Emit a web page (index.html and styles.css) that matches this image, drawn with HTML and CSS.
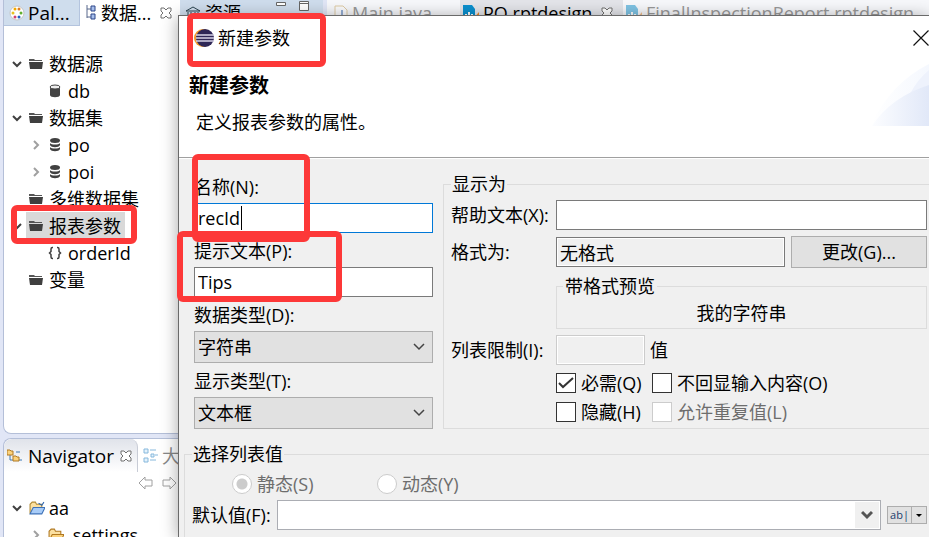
FILE: index.html
```
<!DOCTYPE html>
<html lang="zh-CN">
<head>
    <meta charset="UTF-8">
    <meta name="viewport" content="width=device-width, initial-scale=1.0">
    <title>新建参数</title>
    <link rel="stylesheet" href="styles.css">
</head>
<body>

    <!-- Shared icons -->
    <svg class="sprite" aria-hidden="true">
        <symbol id="folder" viewBox="0 0 14 12">
            <path d="M0 3V1h5l1 1h7v1z" fill="#555"/>
            <path d="M0 4h14l-1 7H1z" fill="#3f3f3f"/>
        </symbol>
        <symbol id="down" viewBox="0 0 10 10">
            <path d="M1 3l4 4 4-4" fill="none" stroke="#404040" stroke-width="2"/>
        </symbol>
        <symbol id="right" viewBox="0 0 10 10">
            <path d="M3 1l4 4-4 4" fill="none" stroke="#a0a0a0" stroke-width="2"/>
        </symbol>
        <symbol id="dataset" viewBox="0 0 12 14">
            <ellipse cx="6" cy="2.5" rx="5" ry="2.5" fill="#404040"/>
            <path d="M1 5c1 2 9 2 10 0v2c-1 3-9 3-10 0zM1 9c1 2 9 2 10 0v2c-1 3-9 3-10 0z" fill="#404040"/>
        </symbol>
        <symbol id="tab-x" viewBox="0 0 12 12">
            <path d="M1 1h3l2 2 2-2h3v3L9 6l2 2v3H8L6 9l-2 2H1V8l2-2-2-2z" fill="#fff" stroke="#707070"/>
        </symbol>
        <symbol id="report" viewBox="0 0 16 16">
            <path d="M0 0h9l3 4v12H0z" fill="#0a8fce"/>
            <path d="M2 9h2v5H2zM5 7h2v7H5zM8 9h2v5H8z" fill="#fff"/>
            <path d="M11 13l5-6v9h-5z" fill="#f08a24"/>
        </symbol>
    </svg>

    <div class="workbench">
        <div class="side">
            <div class="view view-top">
                <div class="tabs">
                    <a href="#" class="tab tab-palette">
                        <svg width="16" height="16" viewBox="0 0 16 16">
                            <circle cx="8" cy="8" r="7" fill="#fff" stroke="#c5c5c5"/>
                            <circle cx="6" cy="4" r="1.5" fill="#f0a800"/><circle cx="10" cy="4" r="1.5" fill="#e08020"/>
                            <circle cx="4" cy="8" r="1.5" fill="#e8c020"/><circle cx="12" cy="8" r="1.5" fill="#60b030"/>
                            <circle cx="6" cy="12" r="1.5" fill="#d04070"/><circle cx="10" cy="12" r="1.5" fill="#2060c0"/>
                        </svg>
                        Pal...
                    </a>
                    <a href="#" class="tab tab-data">
                        <svg width="12" height="16" viewBox="0 0 12 16">
                            <path d="M2 0v13M2 4h4M2 12h4" stroke="#58688c" fill="none"/>
                            <path d="M6 1h4v5H6zM6 9h4v5H6z" fill="#a8c0ec" stroke="#2c4488"/>
                        </svg>
                        <span>数据...</span>
                        <svg class="tab-close" width="12" height="12"><use href="#tab-x"/></svg>
                    </a>
                </div>
                <ul class="tree">
                    <li><svg class="arrow"><use href="#down"/></svg><svg class="icon"><use href="#folder"/></svg><span>数据源</span></li>
                    <li class="child"><i class="arrow"></i>
                        <svg class="icon" viewBox="0 0 12 14"><path d="M1 3v8c0 3 10 3 10 0V3z" fill="#444"/><ellipse cx="6" cy="3" rx="5" ry="2" fill="#eee" stroke="#444"/></svg>
                        <span>db</span></li>
                    <li><svg class="arrow"><use href="#down"/></svg><svg class="icon"><use href="#folder"/></svg><span>数据集</span></li>
                    <li class="child"><svg class="arrow"><use href="#right"/></svg><svg class="icon"><use href="#dataset"/></svg><span>po</span></li>
                    <li class="child"><svg class="arrow"><use href="#right"/></svg><svg class="icon"><use href="#dataset"/></svg><span>poi</span></li>
                    <li><i class="arrow"></i><svg class="icon"><use href="#folder"/></svg><span>多维数据集</span></li>
                    <li class="selected"><svg class="arrow"><use href="#down"/></svg><div class="item"><svg class="icon"><use href="#folder"/></svg><span>报表参数</span></div></li>
                    <li class="child"><i class="arrow"></i>
                        <svg class="icon" viewBox="0 0 14 14"><path d="M5 1.5H4.500Q3 1.500 3 3v2.500L1.500 7 3 8.500V11q0 1.500 1.500 1.500H5M9 1.500h.5Q11 1.500 11 3v2.500L12.500 7 11 8.500V11q0 1.500-1.500 1.500H9" fill="none" stroke="#404040" stroke-width="1.5"/></svg>
                        <span>orderId</span></li>
                    <li><i class="arrow"></i><svg class="icon"><use href="#folder"/></svg><span>变量</span></li>
                </ul>
            </div>

            <div class="view view-bottom">
                <div class="tabs">
                    <a href="#" class="tab tab-navigator">
                        <svg width="15" height="14" viewBox="0 0 15 14">
                            <path d="M3 4v7h4M9 3h4M12 11h3" stroke="#3c78b4" fill="none"/>
                            <path d="M0 1h3l1 1h2v4H0zM6 7h3l1 1h2v4H6z" fill="#fbd27c" stroke="#b07820"/>
                        </svg>
                        <span>Navigator</span>
                        <svg width="12" height="12"><use href="#tab-x"/></svg>
                    </a>
                    <a href="#" class="tab tab-outline">
                        <svg width="15" height="16" viewBox="0 0 15 16">
                            <path d="M1 1h4v4H1zM1 10h4v4H1zM8 6h3v3H8z" fill="#e4f2fc" stroke="#86b8dc"/>
                            <path d="M7 2h6M7 12h6M12 7h3" stroke="#86b8dc"/>
                        </svg>
                        大
                    </a>
                </div>
                <div class="toolbar">
                    <button type="button" aria-label="后退"><svg width="16" height="14" viewBox="0 0 16 14"><path d="M1 7l6-6v3h7v6H7v3z" fill="#fff" stroke="#a0a0a0"/></svg></button>
                    <button type="button" aria-label="前进"><svg width="16" height="14" viewBox="0 0 16 14"><path d="M15 7L9 1v3H2v6h7v3z" fill="#fff" stroke="#a0a0a0"/></svg></button>
                </div>
                <ul class="tree tree-files">
                    <li><svg class="arrow"><use href="#down"/></svg>
                        <svg class="icon" viewBox="0 0 15 13"><path d="M1 12V3l2-2h3l1 2h5v3" fill="#fbe0a0" stroke="#b08830"/><path d="M1 12l3-6h11l-3 6z" fill="#a8ccf8" stroke="#3c70b8"/><path d="M9 2l3 2 2-3" fill="none" stroke="#2c64b0"/></svg>
                        <span>aa</span></li>
                    <li class="child"><svg class="arrow"><use href="#right"/></svg>
                        <svg class="icon" viewBox="0 0 15 13"><path d="M1 12V3l2-2h3l1 2h5v3" fill="#fbe0a0" stroke="#b07820"/><path d="M1 12l3-6h11l-3 6z" fill="#fbd27c" stroke="#b07820"/></svg>
                        <span>.settings</span></li>
                </ul>
            </div>
        </div>

        <div class="main">
            <div class="tabs tabs-resource">
                <a href="#" class="tab">
                    <svg width="16" height="14" viewBox="0 0 16 14"><path d="M1 5l7-4 7 4zM3 6v6M6 6v6M10 6v6M13 6v6M1 13h14" fill="none" stroke="#2c4450"/></svg>
                    <span>资源</span>
                </a>
                <span class="window-buttons">
                    <svg width="10" height="12" viewBox="0 0 10 12"><path d="M0.5 2.5h9v3h-9z" fill="#fff" stroke="#666"/></svg>
                    <svg width="10" height="12" viewBox="0 0 10 12"><path d="M0.5 1.5h9v9h-9zM0 3.5h10" fill="#fff" stroke="#666"/></svg>
                </span>
            </div>
            <div class="tabs tabs-editor">
                <a href="#" class="tab dim">
                    <svg width="14" height="16" viewBox="0 0 14 16"><path d="M1 1h8l4 4v10H1z" fill="#fff" stroke="#c8a050"/><path d="M8 5v5q0 3-4 2" fill="none" stroke="#3868b0" stroke-width="2"/></svg>
                    Main.java
                </a>
                <a href="#" class="tab current">
                    <svg width="16" height="16"><use href="#report"/></svg>
                    <span>PO.rptdesign</span>
                    <svg class="tab-close" width="12" height="12"><use href="#tab-x"/></svg>
                </a>
                <a href="#" class="tab dim">
                    <svg width="16" height="16"><use href="#report"/></svg>
                    FinalInspectionReport.rptdesign
                </a>
            </div>
        </div>
    </div>

    <!-- New parameter dialog -->
    <div class="dialog" role="dialog" aria-labelledby="dialog-title">
        <div class="titlebar">
            <svg width="20" height="20" viewBox="0 0 20 20">
                <circle cx="9" cy="10" r="9" fill="#f39a2c"/>
                <circle cx="11" cy="10" r="9" fill="#2f2757"/>
                <path d="M2 7h18M2 10h18M2 13h18" stroke="#d8d4e8" stroke-width="1.5"/>
            </svg>
            <span id="dialog-title">新建参数</span>
            <button type="button" class="close" aria-label="关闭">
                <svg width="16" height="16" viewBox="0 0 16 16"><path d="M0.5 0.5l15 15M15.5 0.5l-15 15" stroke="#111" stroke-width="1.2"/></svg>
            </button>
        </div>
        <div class="header">
            <div>
                <h1>新建参数</h1>
                <p>定义报表参数的属性。</p>
            </div>
            <svg class="banner" width="58" height="64" viewBox="0 0 58 64">
                <defs>
                    <linearGradient id="fade"><stop offset="0" stop-color="#fcfdff"/><stop offset="1" stop-color="#e1e8f8"/></linearGradient>
                    <linearGradient id="fade-light"><stop offset="0" stop-color="#fff"/><stop offset="1" stop-color="#f5f8fe"/></linearGradient>
                </defs>
                <path d="M0 62Q20 20 58 1V62z" fill="url(#fade-light)"/>
                <path d="M39 31Q46 17 58 7V31z" fill="#eef2fc"/>
                <path d="M1 63Q20 34 58 22V63z" fill="url(#fade)"/>
            </svg>
        </div>

        <form class="body">
            <div class="columns">
                <div class="fields">
                    <div class="field">
                        <label for="name">名称(N):</label>
                        <div class="caret-box">
                            <input type="text" id="name" class="active" value="recId">
                            <span class="caret"></span>
                        </div>
                    </div>
                    <div class="field">
                        <label for="prompt">提示文本(P):</label>
                        <input type="text" id="prompt" value="Tips">
                    </div>
                    <div class="field">
                        <label for="data-type">数据类型(D):</label>
                        <select id="data-type"><option>字符串</option></select>
                    </div>
                    <div class="field">
                        <label for="display-type">显示类型(T):</label>
                        <select id="display-type"><option>文本框</option></select>
                    </div>
                </div>

                <fieldset class="group display-as">
                    <legend>显示为</legend>
                    <div class="row">
                        <label for="help">帮助文本(X):</label>
                        <input type="text" id="help">
                    </div>
                    <div class="row">
                        <label for="format">格式为:</label>
                        <div class="format">
                            <input type="text" id="format" value="无格式" readonly>
                            <button type="button" class="change">更改(G)...</button>
                        </div>
                    </div>
                    <div class="row">
                        <fieldset class="group preview">
                            <legend>带格式预览</legend>
                            <div>我的字符串</div>
                        </fieldset>
                    </div>
                    <div class="row">
                        <label for="limit">列表限制(I):</label>
                        <div class="limit">
                            <input type="text" id="limit" disabled>
                            <span>值</span>
                        </div>
                    </div>
                    <div class="checks">
                        <label><input type="checkbox" checked>必需(Q)</label>
                        <label><input type="checkbox">不回显输入内容(O)</label>
                        <label><input type="checkbox">隐藏(H)</label>
                        <label class="disabled"><input type="checkbox" disabled>允许重复值(L)</label>
                    </div>
                </fieldset>
            </div>

            <fieldset class="group list-values">
                <legend>选择列表值</legend>
                <div class="radios">
                    <label class="disabled"><input type="radio" name="source" checked disabled>静态(S)</label>
                    <label class="disabled"><input type="radio" name="source" disabled>动态(Y)</label>
                </div>
                <div class="default-row">
                    <label for="default">默认值(F):</label>
                    <div class="combo">
                        <input type="text" id="default">
                        <button type="button" aria-label="展开">
                            <svg width="12" height="10" viewBox="0 0 12 10"><path d="M1 2l5 5 5-5" fill="none" stroke="#555" stroke-width="3"/></svg>
                        </button>
                    </div>
                    <div class="split">
                        <button type="button">ab|</button>
                        <button type="button" aria-label="更多"><svg width="6" height="3" viewBox="0 0 6 3"><path d="M0 0h6L3 3z"/></svg></button>
                    </div>
                </div>
            </fieldset>
        </form>
    </div>

    <!-- Red callouts -->
    <div class="mark mark-title"></div>
    <div class="mark mark-name"></div>
    <div class="mark mark-prompt"></div>
    <div class="mark mark-tree"></div>

</body>
</html>
```

FILE: styles.css
```
* {
    box-sizing: border-box;
}
body {
    margin: 0;
    height: 100vh;
    overflow: hidden;
    position: relative;
    font-family: "Open Sans", "Noto Sans CJK SC", sans-serif;
    font-size: 18px;
    line-height: 24px;
    color: #000;
    background-color: #e1e6f6;
}
input, select, button {
    font: inherit;
    color: inherit;
    margin: 0;
}
svg {
    display: block;
    flex-shrink: 0;
}
.sprite {
    position: absolute;
    width: 0;
    height: 0;
}

/* Workbench behind the dialog */
.workbench {
    display: flex;
    height: 100%;
    padding-left: 3px;
}
.side {
    display: flex;
    flex-direction: column;
    gap: 4px;
    width: 177px;
    flex-shrink: 0;
}
.view {
    background-color: #fff;
    border: 1px solid #b4bfd8;
    border-right: none;
    overflow: hidden;
}
.view-top {
    height: 434px;
    flex-shrink: 0;
    border-top: none;
    border-radius: 0 0 0 8px;
}
.view-bottom {
    flex: 1;
    border-bottom: none;
    border-radius: 8px 0 0 0;
}
.tabs {
    display: flex;
    height: 26px;
    white-space: nowrap;
}
.tab {
    display: flex;
    align-items: center;
    gap: 4px;
    padding: 0 5px;
    color: #000;
    text-decoration: none;
}
.tab-palette {
    width: 76px;
    flex-shrink: 0;
    font-size: 19px;
    gap: 3px;
    background-color: #cfdded;
    border-right: 1px solid #b4c4de;
    border-bottom: 1px solid #b4c4de;
}
.tab-close {
    margin-left: 5px;
}
.view-bottom .tabs {
    height: 33px;
}
.tab-navigator {
    width: 134px;
    flex-shrink: 0;
    padding: 0 3px;
    gap: 6px;
    font-size: 19px;
    background-image: linear-gradient(#e0e3ea, #fff);
    border-right: 1px solid #c8ccd6;
    border-radius: 8px 8px 0 0;
}
.tab-outline {
    color: #888;
}
.toolbar {
    display: flex;
    justify-content: flex-end;
    gap: 7px;
    height: 22px;
    padding-right: 3px;
}
.toolbar button {
    padding: 0;
    border: none;
    background: none;
}
.tree {
    list-style: none;
    margin: 0;
    padding: 24px 0 0 8px;
}
.tree-files {
    padding-top: 0;
}
.tree li {
    display: flex;
    align-items: center;
    height: 27px;
    white-space: nowrap;
}
.tree .child {
    padding-left: 19px;
}
.arrow {
    width: 10px;
    height: 10px;
    margin-right: 7px;
}
.icon {
    width: 14px;
    height: 14px;
    margin-right: 6px;
}
.tree-files .icon {
    width: 16px;
    margin-right: 4px;
}
.tree .item {
    display: flex;
    align-items: center;
    height: 27px;
    margin-left: -3px;
    padding: 0 4px 0 3px;
    background-color: #d9d9d9;
}
.main {
    display: flex;
    flex: 1;
    gap: 4px;
    min-width: 0;
}
.tabs-resource {
    width: 143px;
    flex-shrink: 0;
    justify-content: space-between;
    background-color: #cfdded;
}
.window-buttons {
    display: flex;
    gap: 13px;
    padding-right: 14px;
}
.tabs-editor {
    flex: 1;
    background-color: #f7f8fb;
    overflow: hidden;
}
.dim {
    color: #999;
}
.dim svg {
    opacity: 0.5;
}
.tabs-editor .tab {
    padding: 0 3px;
    flex-shrink: 0;
}
.tabs-editor .tab:first-child {
    width: 133px;
    padding-left: 7px;
}
.tabs-editor .current {
    width: 163px;
    background-color: #e4e5ea;
}

/* Dialog */
.dialog {
    position: absolute;
    top: 15px;
    left: 178px;
    right: 0;
    bottom: 0;
    display: flex;
    flex-direction: column;
    background-color: #f0f0f0;
    border: 1px solid #6a6a6a;
    border-right: none;
    border-bottom: none;
    box-shadow: 0 2px 16px rgba(0, 0, 0, 0.35);
}
.titlebar {
    display: flex;
    flex-shrink: 0;
    align-items: center;
    gap: 4px;
    height: 44px;
    padding-left: 15px;
    background-color: #fff;
}
.close {
    margin-left: auto;
    padding: 0;
    border: none;
    background: none;
}
.header {
    display: flex;
    flex-shrink: 0;
    justify-content: space-between;
    height: 98px;
    padding: 14px 0 0 10px;
    background-color: #fff;
    border-bottom: 1px solid #a0a0a0;
}
.header h1 {
    margin: 0;
    font-size: 20px;
    line-height: 24px;
}
.header p {
    margin: 12px 0 0 7px;
}
.banner {
    margin-top: -11px;
}
.body {
    flex: 1;
    min-height: 0;
    overflow: hidden;
    padding: 13px 0 0 5px;
    border-top: 1px solid #fff;
}
.columns {
    display: grid;
    grid-template-columns: 249px 1fr;
    gap: 10px;
}
.fields {
    padding: 3px 0 0 10px;
}
.field {
    display: flex;
    flex-direction: column;
    gap: 4px;
    margin-bottom: 6px;
}
.field:last-child {
    margin-bottom: 0;
}
input[type="text"] {
    width: 100%;
    min-width: 0;
    height: 30px;
    padding: 0 3px;
    background-color: #fff;
    border: 1px solid #7a7a7a;
    outline: none;
}
input[type="text"].active {
    border-color: #0078d7;
}
input[type="text"]:read-only {
    background-color: #f0f0f0;
    box-shadow: inset 0 0 0 1px #fff;
}
input[type="text"]:disabled {
    border-color: #ccc;
}
.caret-box {
    position: relative;
}
.caret {
    position: absolute;
    top: 3px;
    left: 47px;
    width: 1px;
    height: 24px;
    background-color: #000;
}
select {
    width: 100%;
    height: 32px;
    padding: 0 3px;
    appearance: none;
    border: 1px solid #adadad;
    border-radius: 0;
    background: #e1e1e1 url("data:image/svg+xml,%3Csvg xmlns='http://www.w3.org/2000/svg' width='12' height='8'%3E%3Cpath d='M1 1l5 5 5-5' fill='none' stroke='%23444' stroke-width='1.5'/%3E%3C/svg%3E") no-repeat right 7px center;
}
.group {
    min-width: 0;
    margin: 0;
    border: 1px solid #dcdcdc;
}
.group legend {
    padding: 0 2px;
}
.display-as {
    padding: 4px 2px 2px 7px;
    border-right: none;
}
.display-as > legend {
    padding: 0 1px;
}
.row {
    display: grid;
    grid-template-columns: 105px 1fr;
    align-items: center;
    margin-bottom: 6px;
    white-space: nowrap;
}
.preview {
    grid-column: 2;
    padding: 3px 0;
    text-align: center;
}
.preview legend {
    margin-left: 6px;
    text-align: left;
}
.format {
    display: flex;
    align-items: center;
    gap: 6px;
}
.format input {
    flex: 1;
}
.change {
    flex: 0 0 136px;
    height: 32px;
    padding: 0;
    background-color: #e1e1e1;
    border: 1px solid #adadad;
}
.limit {
    display: flex;
    align-items: center;
    gap: 5px;
}
.limit input[type="text"] {
    width: 89px;
}
.checks {
    display: grid;
    grid-template-columns: 96px 1fr;
    grid-auto-rows: 29px;
    margin: -3px 0 0 105px;
}
.checks label, .radios label {
    display: flex;
    align-items: center;
    gap: 5px;
}
.disabled {
    color: #6d6d6d;
}
input[type="checkbox"], input[type="radio"] {
    width: 20px;
    height: 20px;
    flex-shrink: 0;
    appearance: none;
    background: #fff no-repeat center;
    border: 1px solid #333;
}
input[type="checkbox"]:checked {
    background-image: url("data:image/svg+xml,%3Csvg xmlns='http://www.w3.org/2000/svg' width='16' height='12'%3E%3Cpath d='M1 6l4 4L15 1' fill='none' stroke='%23333' stroke-width='2'/%3E%3C/svg%3E");
}
input[type="checkbox"]:disabled, input[type="radio"]:disabled {
    border-color: #ccc;
}
input[type="radio"] {
    border-radius: 50%;
}
input[type="radio"]:checked {
    background-image: radial-gradient(circle, #ccc 5px, #fff 6px);
}

/* Default value list */
.list-values {
    height: 120px;
    margin-top: 13px;
    padding: 3px 2px 0 7px;
    border-right: none;
}
.list-values > legend {
    padding: 0 1px;
}
.radios {
    display: grid;
    grid-template-columns: 145px 1fr;
    height: 30px;
    padding-left: 40px;
}
.default-row {
    display: flex;
    align-items: center;
    gap: 6px;
    margin-top: 1px;
}
.default-row > label {
    width: 79px;
    line-height: 30px;
    white-space: nowrap;
}
.combo {
    display: flex;
    flex: 1;
    height: 30px;
    padding: 1px;
    background-color: #fff;
    border: 1px solid #abadb3;
}
.combo input[type="text"] {
    height: 26px;
    border: none;
}
.combo button {
    display: flex;
    align-items: center;
    justify-content: center;
    width: 25px;
    padding: 0;
    border: none;
    background-color: #f0f0f0;
}
.split {
    display: flex;
    height: 18px;
    border: 1px solid #adadad;
}
.split button {
    display: flex;
    align-items: center;
    justify-content: center;
    width: 23px;
    padding: 0;
    border: none;
    background-color: #e1e1e1;
    color: #1c3c6c;
    font-size: 11px;
    line-height: 14px;
}
.split button + button {
    width: 15px;
    border-left: 1px solid #adadad;
}

/* Callout frames drawn over the window */
.mark {
    position: absolute;
    border: 6px solid #fd3838;
    border-radius: 6px;
    pointer-events: none;
}
.mark-title {
    left: 187px;
    top: 13px;
    width: 139px;
    height: 54px;
}
.mark-name {
    left: 192px;
    top: 154px;
    width: 118px;
    height: 88px;
}
.mark-prompt {
    left: 177px;
    top: 231px;
    width: 165px;
    height: 71px;
}
.mark-tree {
    left: 11px;
    top: 205px;
    width: 126px;
    height: 39px;
}
```
